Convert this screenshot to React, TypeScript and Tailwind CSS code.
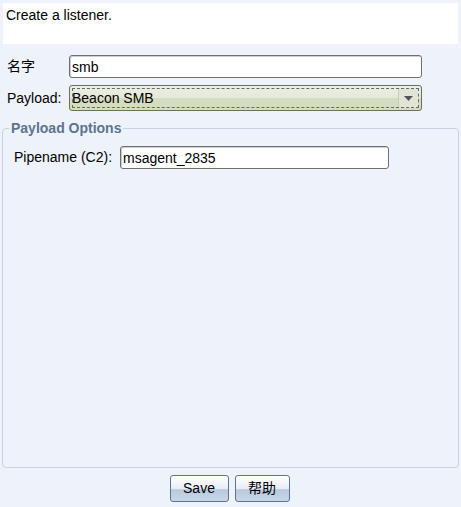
export default function App() {
  return (
    <div
      className="w-[461px] h-[507px] bg-[#eef2fa] text-[14px] text-black flex flex-col"
      style={{ fontFamily: '"Liberation Sans", "Noto Sans CJK SC", sans-serif' }}
    >
      {/* Description */}
      <div className="mx-[3px] mt-[3px] h-[41px] bg-white pl-[3px] pt-[4px] leading-[16px]">
        Create a listener.
      </div>

      {/* Fields */}
      <div className="flex flex-col gap-[7px] mt-[11px] pl-[7px]">
        <div className="flex items-center">
          <span className="w-[62px]">名字</span>
          <input
            defaultValue="smb"
            className="w-[353px] h-[23px] bg-white border border-[#6f6f6f] rounded-[3px] px-[2px] outline-none shadow-[inset_1px_1px_0_#cfcfcf]"
          />
        </div>
        <div className="flex items-center">
          <span className="w-[62px]">Payload:</span>
          <div className="relative w-[353px] h-[26px] rounded-[3px] border border-[#6b6f5e] bg-[linear-gradient(#eceee0_0%,#e6e9d8_50%,#d6dcc0_50%,#d6dcc0_100%)] flex items-center">
            <div className="absolute inset-[2px] border border-dashed border-[#5a6a80] rounded-[1px]" />
            <span className="pl-[2px] flex-1">Beacon SMB</span>
            <div className="w-[20px] h-[20px] mr-[3px] border-l border-[#c9ccb8] bg-[#e2e5d6] flex items-center justify-center">
              <svg width="9" height="5" viewBox="0 0 9 5">
                <path d="M0 0 L9 0 L4.5 5 Z" fill="#555" />
              </svg>
            </div>
          </div>
        </div>
      </div>

      {/* Payload Options */}
      <fieldset className="mx-[2px] mt-[9px] h-[348px] border border-[#c8d1e0] rounded-[4px] pl-[11px] pt-[2px]">
        <legend className="px-[2px] -ml-[5px] font-bold text-[#5d7391] leading-[16px]">
          Payload Options
        </legend>
        <div className="flex items-center mt-[8px]">
          <span className="w-[106px]">Pipename (C2):</span>
          <input
            defaultValue="msagent_2835"
            className="w-[269px] h-[23px] bg-white border border-[#6f6f6f] rounded-[3px] px-[2px] outline-none shadow-[inset_1px_1px_0_#cfcfcf]"
          />
        </div>
      </fieldset>

      {/* Buttons */}
      <div className="flex justify-center gap-[6px] mt-[7px] pr-[2px]">
        <button className="w-[59px] h-[27px] rounded-[3px] border border-[#5b7494] bg-[linear-gradient(#ffffff_0%,#e8eef6_50%,#b9c9dd_55%,#c9d6e6_100%)]">
          Save
        </button>
        <button className="w-[55px] h-[27px] rounded-[3px] border border-[#5b7494] bg-[linear-gradient(#ffffff_0%,#e8eef6_50%,#b9c9dd_55%,#c9d6e6_100%)]">
          帮助
        </button>
      </div>
    </div>
  );
}
